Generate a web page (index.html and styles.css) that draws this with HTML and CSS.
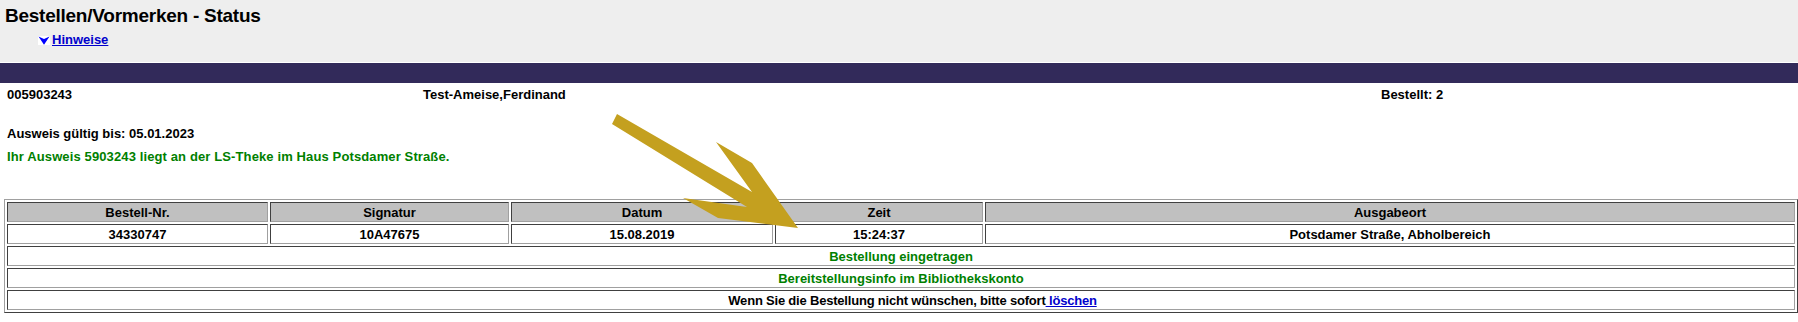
FILE: index.html
```html
<!DOCTYPE html>
<html>

<head>
  <meta charset="UTF-8">
  <title>Bestellen/Vormerken - Status</title>
  <link rel="stylesheet" href="styles.css">
</head>

<body>
  <div class="kopf">
    <h1>Bestellen/Vormerken - Status</h1>
    <div class="hinweise">
      <svg class="pfeil-klein" width="12" height="9" viewBox="0 0 12 9">
        <rect width="12" height="9" fill="#ffffff"/>
        <polygon points="0.5,0.5 6,3 11.5,0.5 6,8.7" fill="#0000ff"/>
      </svg>
      <a href="#">Hinweise</a>
    </div>
  </div>
  <div class="balken"></div>

  <div class="inhalt">
    <div class="leser">
      <span>005903243</span>
      <span>Test-Ameise,Ferdinand</span>
      <span>Bestellt: 2</span>
    </div>
    <p class="gueltig">Ausweis gültig bis: 05.01.2023</p>
    <p class="gruen">Ihr Ausweis 5903243 liegt an der LS-Theke im Haus Potsdamer Straße.</p>

    <table class="bestellungen">
      <tr>
        <th class="sp-nr">Bestell-Nr.</th>
        <th class="sp-sig">Signatur</th>
        <th class="sp-datum">Datum</th>
        <th class="sp-zeit">Zeit</th>
        <th>Ausgabeort</th>
      </tr>
      <tr>
        <td>34330747</td>
        <td>10A47675</td>
        <td>15.08.2019</td>
        <td>15:24:37</td>
        <td>Potsdamer Straße, Abholbereich</td>
      </tr>
      <tr>
        <td colspan="5" class="gruen">Bestellung eingetragen</td>
      </tr>
      <tr>
        <td colspan="5" class="gruen">Bereitstellungsinfo im Bibliothekskonto</td>
      </tr>
      <tr>
        <td colspan="5" class="loeschen">Wenn Sie die Bestellung nicht wünschen, bitte sofort<a href="#"> löschen</a></td>
      </tr>
    </table>
  </div>

  <!-- Markierungspfeil -->
  <svg class="markierung" width="210" height="140" viewBox="0 0 210 140">
    <polygon points="17,14 152,92 116,42 152,63 198,128 118,118 83,98 147,107 12,24" fill="#c4a01f"/>
  </svg>
</body>

</html>
```

FILE: styles.css
```css
body {
  margin: 0;
  font-family: "Liberation Sans", Arial, sans-serif;
  font-size: 13px;
  font-weight: bold;
  color: #000;
  background: #fff;
}

a {
  color: #0000cc;
}

.kopf {
  height: 63px;
  box-sizing: border-box;
  padding: 4px 0 0 5px;
  background: #eeeeee;
  border-bottom: 1px solid #fff;
}

.kopf h1 {
  margin: 0;
  font-size: 19px;
  letter-spacing: -0.25px;
  line-height: 23px;
}

.hinweise {
  display: flex;
  align-items: center;
  gap: 2px;
  margin: 5px 0 0 33px;
  line-height: 15px;
}

.pfeil-klein {
  display: block;
  margin-top: 1px;
}

.balken {
  height: 20px;
  background: #322a5a;
}

.inhalt {
  padding: 4px 0 0 4px;
}

.leser {
  display: grid;
  grid-template-columns: 416px 958px auto;
  padding-left: 3px;
  line-height: 15px;
}

.gueltig,
.inhalt > .gruen {
  margin: 0;
  padding-left: 3px;
  line-height: 15px;
}

.gueltig {
  margin-top: 24px;
}

.inhalt > .gruen {
  margin-top: 8px;
  letter-spacing: 0.12px;
}

.gruen {
  color: #008000;
}

.bestellungen {
  margin-top: 35px;
  width: 1794px;
  table-layout: fixed;
  border-spacing: 2px;
  border: 1px solid;
  border-color: #a0a0a0 #404040 #404040 #a0a0a0;
}

.bestellungen th,
.bestellungen td {
  box-sizing: border-box;
  padding: 1px;
  height: 20px;
  text-align: center;
  line-height: 15px;
  border: 1px solid;
  border-color: #404040 #a0a0a0 #a0a0a0 #404040;
}

.bestellungen th {
  background: #c0c0c0;
}

.bestellungen .loeschen {
  padding-left: 24px;
  letter-spacing: -0.2px;
}

.sp-nr {
  width: 261px;
}

.sp-sig {
  width: 239px;
}

.sp-datum {
  width: 262px;
}

.sp-zeit {
  width: 208px;
}

.markierung {
  position: absolute;
  left: 600px;
  top: 100px;
}
```
